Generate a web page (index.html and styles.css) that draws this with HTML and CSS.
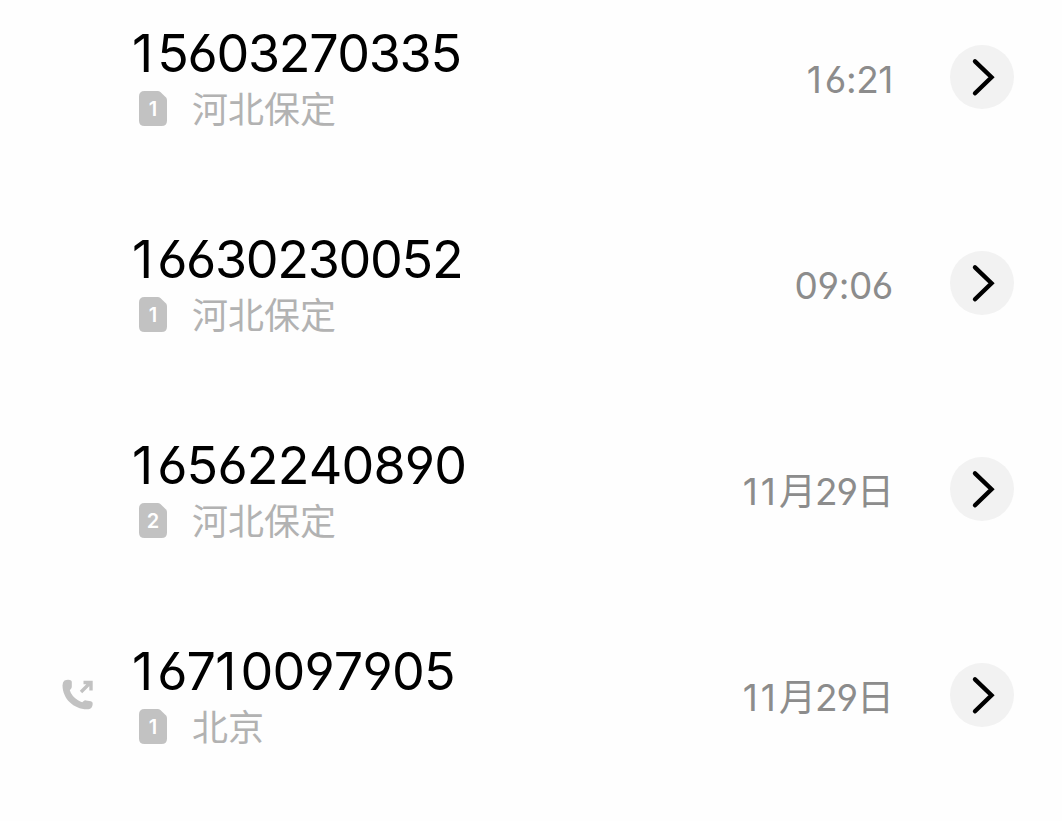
FILE: index.html
```html
<!DOCTYPE html>
<html lang="zh-CN">
<head>
<meta charset="utf-8">
<title>通话记录</title>
<link rel="stylesheet" href="styles.css">
</head>
<body>
<svg class="defs" width="0" height="0">
  <symbol id="sim" viewBox="0 0 28 35"><path d="M5.500 0H18.600Q20.200 0 21.400 1.100L26.800 6.300Q28 7.500 28 9.200V29.500Q28 35 22.500 35H5.500Q0 35 0 29.500V5.500Q0 0 5.500 0Z"/></symbol>
  <symbol id="chevron" viewBox="0 0 64 64"><path d="M25 16.300L41.500 32.200L25 48.300"/></symbol>
</svg>
<main class="calls">
  <article class="call">
    <div class="status"></div>
    <div class="info">
      <div class="number"><i>1</i>5603270335</div>
      <div class="place"><span class="sim"><svg><use href="#sim"/></svg><b>1</b></span><span class="city">河北保定</span></div>
    </div>
    <time class="time clock"><i>1</i>6:21</time>
    <div class="more"><svg><use href="#chevron"/></svg></div>
  </article>
  <article class="call">
    <div class="status"></div>
    <div class="info">
      <div class="number"><i>1</i>6630230052</div>
      <div class="place"><span class="sim"><svg><use href="#sim"/></svg><b>1</b></span><span class="city">河北保定</span></div>
    </div>
    <time class="time clock">09:06</time>
    <div class="more"><svg><use href="#chevron"/></svg></div>
  </article>
  <article class="call">
    <div class="status"></div>
    <div class="info">
      <div class="number loose"><i>1</i>6562240890</div>
      <div class="place"><span class="sim"><svg><use href="#sim"/></svg><b>2</b></span><span class="city">河北保定</span></div>
    </div>
    <time class="time"><i>1</i><i>1</i>月29日</time>
    <div class="more"><svg><use href="#chevron"/></svg></div>
  </article>
  <article class="call">
    <div class="status">
      <svg class="outgoing" viewBox="0 0 32 32">
        <path class="handset" d="M2.500 1.600Q5 .2 8 .9Q9.800 1.300 9.800 2.800V7.500Q9.800 9 8.800 10L7.800 11.200Q9.500 17 16 21.300Q18.500 23 20.200 23.200L21.700 21.900Q22.600 21.200 24 21.400L28.800 22.200Q30.700 22.600 30.700 24.500C30.500 28.500 29 30.300 25 30.300C11.500 30 .8 20 .5 6.500Q.5 3 2.500 1.600Z"/>
        <path class="arrow" d="M19 13L28 4M21.500 3.500H29V11.500"/>
      </svg>
    </div>
    <div class="info">
      <div class="number loose"><i>1</i>67<i>1</i>0097905</div>
      <div class="place"><span class="sim"><svg><use href="#sim"/></svg><b>1</b></span><span class="city">北京</span></div>
    </div>
    <time class="time"><i>1</i><i>1</i>月29日</time>
    <div class="more"><svg><use href="#chevron"/></svg></div>
  </article>
</main>
</body>
</html>
```
FILE: styles.css
```css
* { box-sizing: border-box; }
body {
  margin: 0;
  height: 821px;
  overflow: hidden;
  background: #fefefe;
  font-family: Inter, "Noto Sans CJK SC", sans-serif;
  font-feature-settings: "cv03", "cv04";
  font-kerning: none;
}
i { font-style: normal; }
.defs { display: block; }
.calls { margin-top: -26px; }
.call {
  display: flex;
  align-items: center;
  height: 206px;
  padding-right: 48px;
}
.status { width: 132px; padding-left: 62px; }
.outgoing { display: block; width: 32px; height: 32px; }
.handset { fill: #c2c2c2; }
.arrow { fill: none; stroke: #c2c2c2; stroke-width: 3.400; }
.info { flex: 1; padding-top: 8px; }
.number {
  font-size: 52px;
  line-height: 56px;
  color: #000;
  letter-spacing: -1.300px;
  white-space: nowrap;
}
.number.loose { letter-spacing: -.8px; }
.number i { letter-spacing: 4px; }
.place {
  display: flex;
  align-items: center;
  height: 54px;
  padding-left: 7px;
  gap: 25px;
  font-size: 36px;
  line-height: 56px;
  font-family: "Noto Sans CJK SC", sans-serif;
  color: #b2b2b2;
}
.city { margin-top: -4px; }
.sim {
  display: grid;
  place-items: center;
  width: 28px;
  height: 35px;
  margin-top: -2px;
}
.sim svg { grid-area: 1 / 1; width: 28px; height: 35px; fill: #c2c2c2; }
.sim b {
  grid-area: 1 / 1;
  z-index: 1;
  padding-top: 2px;
  font: 600 20px/24px Inter, sans-serif;
  color: #fff;
}
.time {
  padding-top: 5px;
  margin-right: 57px;
  font-size: 37px;
  font-weight: 380;
  line-height: 48px;
  color: #8c8c8c;
  white-space: nowrap;
  letter-spacing: -1px;
}
.clock { letter-spacing: -.4px; }
.time i { letter-spacing: 3px; }
.more { width: 64px; height: 64px; border-radius: 50%; background: #f2f2f2; }
.more svg {
  display: block;
  width: 64px;
  height: 64px;
  fill: none;
  stroke: #000;
  stroke-width: 4.400;
  stroke-linecap: round;
  stroke-linejoin: miter;
}
```
